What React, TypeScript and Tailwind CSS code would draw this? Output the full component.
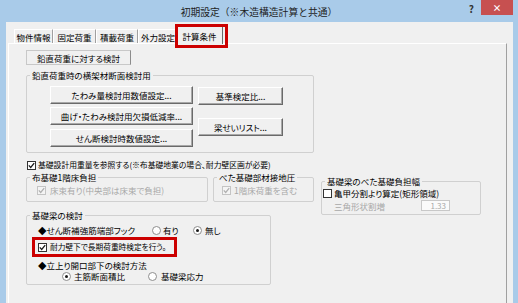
import type { ReactNode } from "react";

function Check({ checked = false, disabled = false }: { checked?: boolean; disabled?: boolean }) {
  return (
    <span
      className={`inline-flex w-[9px] h-[9px] shrink-0 items-center justify-center border ${
        disabled ? "border-[#c4c4c4] bg-[#f4f4f4]" : "border-[#333333] bg-white"
      }`}
    >
      {checked && (
        <svg width="7" height="7" viewBox="0 0 7 7">
          <path d="M0.8 3.4 L2.7 5.4 L6.2 1.2" fill="none" stroke={disabled ? "#b0b0b0" : "#1a1a1a"} strokeWidth="1.3" />
        </svg>
      )}
    </span>
  );
}

function Radio({ on = false }: { on?: boolean }) {
  return (
    <span className="inline-flex w-[9px] h-[9px] shrink-0 items-center justify-center rounded-full border border-[#8e8e8e] bg-white">
      {on && <span className="w-[3px] h-[3px] rounded-full bg-[#1a1a1a]" />}
    </span>
  );
}

function Btn({ w, children }: { w: string; children: ReactNode }) {
  return (
    <div
      className={`${w} h-[18px] flex items-center justify-center border border-t-white border-l-white border-r-[#6a6a6a] border-b-[#6a6a6a] shadow-[inset_-1px_-1px_0_#a8a8a8] text-[8.5px] leading-[10px]`}
    >
      {children}
    </div>
  );
}

function Group({ label, className, children }: { label: string; className: string; children: ReactNode }) {
  return (
    <fieldset className={`border border-[#d0d0d0] rounded-[2px] px-0 ${className}`}>
      <legend className="ml-[3px] px-[2px] text-[8.5px] leading-[10px]">{label}</legend>
      {children}
    </fieldset>
  );
}

const tabs: [string, string][] = [
  ["物件情報", "w-[39px]"],
  ["固定荷重", "w-[43px]"],
  ["積載荷重", "w-[42px]"],
  ["外力設定", "w-[40px]"],
];

export default function App() {
  return (
    <div className="w-[518px] h-[303px] bg-[#a9cbe9] flex flex-col overflow-hidden font-['Noto_Sans_CJK_JP',sans-serif] [font-feature-settings:'palt'] text-black">
      {/* タイトルバー */}
      <div className="h-[22px] shrink-0 grid grid-cols-[1fr_auto_1fr]">
        <div />
        <div className="pt-[5px] text-[9.8px] leading-[14px] text-[#1e1e1e] [font-feature-settings:normal]">
          初期設定（※木造構造計算と共通）
        </div>
        <div className="flex justify-end items-start pr-[5px]">
          <span className="mt-[3px] mr-[7px] text-[10px] font-bold leading-[12px] text-[#333333]">?</span>
          <div className="w-[32px] h-[15px] bg-[#c75050] flex items-center justify-center text-white text-[9px] font-bold leading-none">
            ×
          </div>
        </div>
      </div>

      <div className="flex-1 ml-[6px] mr-[5px] bg-[#f0f0f0] flex flex-col">
        {/* タブ */}
        <div className="h-[21px] shrink-0 pl-[8px] flex items-end">
          {tabs.map(([t, w]) => (
            <div
              key={t}
              className={`${w} h-[14px] flex items-center justify-center overflow-hidden border-t border-l border-white border-r border-r-[#a0a0a0] text-[8.5px] leading-[10px]`}
            >
              {t}
            </div>
          ))}
          <div className="relative z-10 -ml-[2px] -mb-px w-[47px] h-[18px] flex items-center justify-center bg-[#f0f0f0] border-t border-l border-white border-r border-r-[#6a6a6a] text-[8.5px] leading-[10px]">
            計算条件
            <span className="absolute left-[-2px] top-[-3px] right-[-6px] bottom-[-4px] border-[3px] border-[#cc0000]" />
          </div>
        </div>

        {/* タブパネル */}
        <div className="ml-[2px] w-[499px] flex-1 border-t border-l border-white border-r border-r-[#a0a0a0] flex flex-col items-start">
          <div className="ml-[17px] mt-[6px] w-[105px] h-[15px] border border-[#c8c8c8] border-r-[#8c8c8c] flex items-center justify-center text-[8.5px] leading-[10px]">
            鉛直荷重に対する検討
          </div>

          <Group label="鉛直荷重時の横架材断面検討用" className="ml-[17px] mt-[5px] w-[288px] pb-[5px]">
            <div className="flex pl-[23px]">
              <div className="mt-[6px] flex flex-col">
                <Btn w="w-[143px]">たわみ量検討用数値設定...</Btn>
                <div className="mt-[3px]">
                  <Btn w="w-[143px]">曲げ・たわみ検討用欠損低減率...</Btn>
                </div>
                <div className="mt-[4px]">
                  <Btn w="w-[143px]">せん断検討時数値設定...</Btn>
                </div>
              </div>
              <div className="ml-[5px] mt-[7px] flex flex-col gap-[13px]">
                <Btn w="w-[85px]">基準検定比...</Btn>
                <Btn w="w-[85px]">梁せいリスト...</Btn>
              </div>
            </div>
          </Group>

          <div className="ml-[18px] mt-[7px] h-[10px] flex items-center gap-[2px] text-[7.8px] leading-[10px]">
            <Check checked />
            <span>基礎設計用重量を参照する(※布基礎地業の場合、耐力壁区画が必要)</span>
          </div>

          <div className="ml-[17px] mt-[2px] flex items-start">
            <div className="flex flex-col">
              <div className="flex">
                <Group label="布基礎1階床負担" className="w-[182px] pb-[6px]">
                  <div className="mt-[3px] ml-[10px] h-[10px] flex items-center gap-[4px] text-[8.5px] leading-[10px] text-[#a8a8a8]">
                    <Check checked disabled />
                    <span>床束有り(中央部は床束で負担)</span>
                  </div>
                </Group>
                <Group label="べた基礎部材接地圧" className="ml-[5px] w-[101px] pb-[6px]">
                  <div className="mt-[3px] ml-[8px] h-[10px] flex items-center gap-[3px] text-[8.5px] leading-[10px] text-[#a8a8a8]">
                    <Check checked disabled />
                    <span>1階床荷重を含む</span>
                  </div>
                </Group>
              </div>

              <Group label="基礎梁の検討" className="mt-[8px] w-[245px] pb-[3px]">
                <div className="mt-[5px] ml-[11px] h-[10px] flex items-center text-[8.5px] leading-[10px]">
                  <span className="w-[114px]">◆せん断補強筋端部フック</span>
                  <Radio />
                  <span className="ml-[2px] w-[30px]">有り</span>
                  <Radio on />
                  <span className="ml-[3px]">無し</span>
                </div>
                <div className="mt-[5px] ml-[8px] w-[139px] h-[14px] pl-[3px] flex items-center gap-[3px] outline-[3px] outline-solid outline-[#cc0000] text-[7.7px] leading-[10px]">
                  <Check checked />
                  <span className="whitespace-nowrap">耐力壁下で長期荷重時検定を行う。</span>
                </div>
                <div className="mt-[6px] ml-[11px] h-[10px] flex items-center text-[8.5px] leading-[10px]">
                  ◆立上り開口部下の検討方法
                </div>
                <div className="mt-[1px] ml-[35px] h-[10px] flex items-center text-[8.5px] leading-[10px]">
                  <Radio on />
                  <span className="ml-[3px] w-[74px]">主筋断面積比</span>
                  <Radio />
                  <span className="ml-[4px]">基礎梁応力</span>
                </div>
              </Group>
            </div>

            <Group label="基礎梁のべた基礎負担幅" className="ml-[7px] mt-[4px] w-[160px] pb-[3px]">
              <div className="mt-[2px] ml-[1px] h-[10px] flex items-center gap-[2px] text-[8.5px] leading-[10px]">
                <Check />
                <span>亀甲分割より算定(矩形領域)</span>
              </div>
              <div className="mt-[2px] ml-[12px] h-[11px] flex items-center text-[8.5px] leading-[10px] text-[#a8a8a8]">
                <span className="w-[87px]">三角形状割増</span>
                <div className="w-[29px] h-[11px] border border-[#c8c8c8] bg-[#fafafa] flex items-center justify-end pr-[3px] text-[8px] leading-[9px] text-[#a8a8a8]">
                  1.33
                </div>
              </div>
            </Group>
          </div>
        </div>
      </div>
    </div>
  );
}
